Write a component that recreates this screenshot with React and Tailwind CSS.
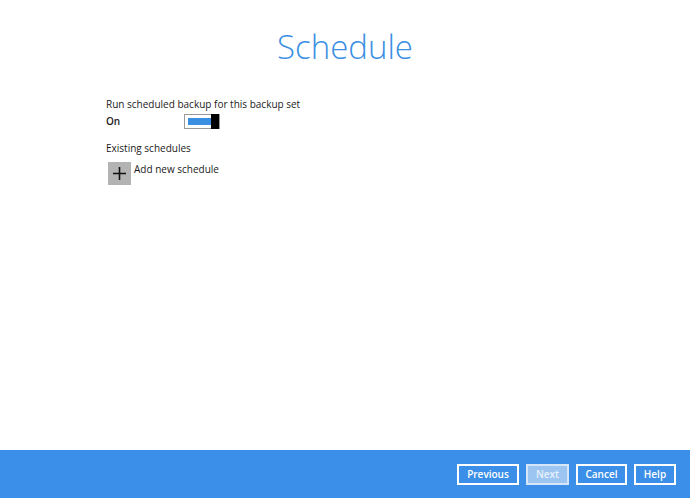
import { useState } from "react";

const App = () => {
  const [enabled, setEnabled] = useState(true);

  return (
    <div
      className="flex flex-col w-[690px] h-[498px] bg-white text-[#1a1a1a]"
      style={{ fontFamily: '"Open Sans", "Noto Sans", sans-serif' }}
    >
      <div className="flex-1">
        <h1 className="mt-[25px] text-center text-[33px] font-light leading-[44px] text-[#3b8fe3]">
          Schedule
        </h1>

        <div className="ml-[106px] mt-[28px]">
          <div className="text-[10px] leading-[14px]">
            Run scheduled backup for this backup set
          </div>
          <div className="flex items-center mt-[1px] h-[18px]">
            <span className="w-[78px] text-[10px] font-semibold">
              {enabled ? "On" : "Off"}
            </span>
            <button
              type="button"
              onClick={() => setEnabled(!enabled)}
              className="flex items-center w-[36px] h-[15px] pl-[3px] border border-[#9a9a9a] bg-white"
            >
              <span className="w-[23px] h-[7px] bg-[#3b8fe3]" />
              <span className="w-[8px] h-[15px] ml-auto bg-black" />
            </button>
          </div>

          <div className="mt-[11px] text-[10px] leading-[14px]">
            Existing schedules
          </div>
          <div className="flex items-start mt-[7px]">
            <button
              type="button"
              className="flex items-center justify-center w-[23px] h-[23px] ml-[2px] bg-[#b3b3b3]"
            >
              <svg width="13" height="13" viewBox="0 0 13 13">
                <path d="M6.5 0v13M0 6.5h13" stroke="#111" strokeWidth="1.6" />
              </svg>
            </button>
            <span className="ml-[3px] text-[10px] leading-[14px]">
              Add new schedule
            </span>
          </div>
        </div>
      </div>

      <div className="flex items-center justify-end gap-[7px] h-[48px] pr-[14px] bg-[#3b8fe8]">
        <button className="w-[62px] h-[21px] border-2 border-white text-[10px] font-semibold text-white">
          Previous
        </button>
        <button className="w-[43px] h-[21px] border-2 border-[#d5e6f9] bg-[#9cc5f2] text-[10px] font-semibold text-[#e8f1fc]">
          Next
        </button>
        <button className="w-[51px] h-[21px] border-2 border-white text-[10px] font-semibold text-white">
          Cancel
        </button>
        <button className="w-[42px] h-[21px] border-2 border-white text-[10px] font-semibold text-white">
          Help
        </button>
      </div>
    </div>
  );
};

export default App;
